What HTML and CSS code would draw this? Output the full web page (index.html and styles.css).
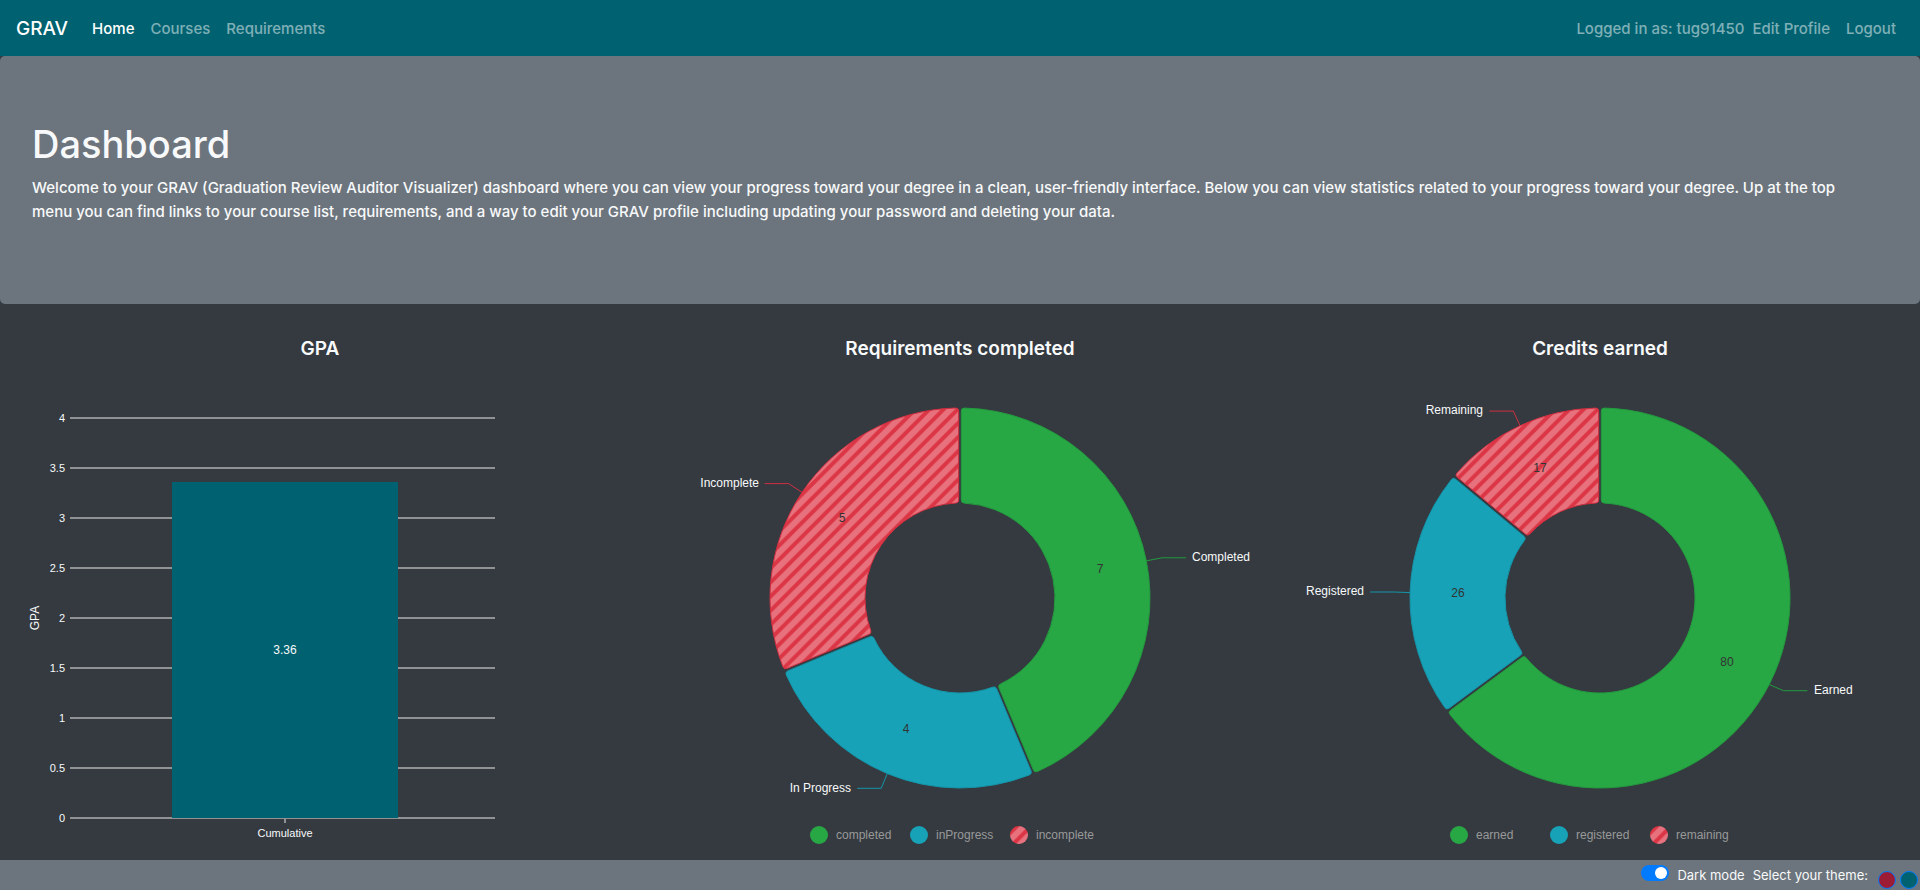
FILE: index.html
```html
<!DOCTYPE html>
<html lang="en">
<head>
<meta charset="utf-8">
<meta name="viewport" content="width=device-width, initial-scale=1">
<title>GRAV</title>
<link rel="stylesheet" href="styles.css">
</head>
<body>
<nav class="navbar">
  <a class="brand" href="#">GRAV</a>
  <a class="nav-link active" href="#">Home</a>
  <a class="nav-link" href="#">Courses</a>
  <a class="nav-link" href="#">Requirements</a>
  <span class="user">Logged in as: tug91450</span>
  <a class="nav-link" href="#">Edit Profile</a>
  <a class="nav-link" href="#">Logout</a>
</nav>

<header class="intro">
  <h1>Dashboard</h1>
  <p>Welcome to your GRAV (Graduation Review Auditor Visualizer) dashboard where you can view your progress toward your degree in a clean, user-friendly interface. Below you can view statistics related to your progress toward your degree. Up at the top menu you can find links to your course list, requirements, and a way to edit your GRAV profile including updating your password and deleting your data.</p>
</header>

<main class="charts">
  <section class="chart">
    <h2>GPA</h2>
    <svg viewBox="0 0 640 500" role="img" aria-label="Cumulative GPA 3.36">
      <path class="grid" d="M70 50H495M70 100H495M70 150H495M70 200H495M70 250H495M70 300H495M70 350H495M70 400H495M70 450H495"/>
      <path class="grid" d="M285 450V455"/>
      <rect class="bar" x="172" y="114" width="226" height="336"/>
      <g class="ticks">
        <text x="65" y="50">4</text>
        <text x="65" y="100">3.5</text>
        <text x="65" y="150">3</text>
        <text x="65" y="200">2.5</text>
        <text x="65" y="250">2</text>
        <text x="65" y="300">1.5</text>
        <text x="65" y="350">1</text>
        <text x="65" y="400">0.5</text>
        <text x="65" y="450">0</text>
      </g>
      <text class="category" x="285" y="465">Cumulative</text>
      <text class="bar-value" x="285" y="282">3.36</text>
      <text class="axis-title" transform="translate(35 250) rotate(-90)">GPA</text>
    </svg>
  </section>

  <section class="chart">
    <h2>Requirements completed</h2>
    <svg viewBox="0 0 640 500" role="img" aria-label="Requirements: 7 completed, 4 in progress, 5 incomplete">
      <defs>
        <pattern id="stripes" width="14.142" height="14.142" patternUnits="userSpaceOnUse">
          <rect width="14.142" height="14.142" fill="#dc3545"/>
          <path d="M-14.142 14.142L14.142 -14.142M-14.142 28.284L28.284 -14.142M0 28.284L28.284 0" stroke="#fff" stroke-opacity=".3" stroke-width="6" stroke-linecap="square"/>
        </pattern>
      </defs>
      <g class="donut" transform="translate(320 230)">
        <path class="slice done" data-value="7"/>
        <path class="slice active" data-value="4"/>
        <path class="slice open" data-value="5"/>
        <path class="link done" d="M186.3 -37.1L202 -40.2H226"/>
        <path class="link active" d="M-72.7 175.5L-78.8 190.3H-102.8"/>
        <path class="link open" d="M-158 -105.6L-171.3 -114.4H-195.3"/>
        <text class="label" x="232" y="-40">Completed</text>
        <text class="label left" x="-109" y="191">In Progress</text>
        <text class="label left" x="-201" y="-114">Incomplete</text>
        <text class="value" x="140" y="-28">7</text>
        <text class="value" x="-54" y="132">4</text>
        <text class="value" x="-118" y="-79">5</text>
      </g>
      <g class="legend">
        <g transform="translate(170 458)"><circle class="done" cx="9" cy="9" r="9"/><text x="26" y="9">completed</text></g>
        <g transform="translate(270 458)"><circle class="active" cx="9" cy="9" r="9"/><text x="26" y="9">inProgress</text></g>
        <g transform="translate(370 458)"><circle class="open" cx="9" cy="9" r="9"/><text x="26" y="9">incomplete</text></g>
      </g>
    </svg>
  </section>

  <section class="chart">
    <h2>Credits earned</h2>
    <svg viewBox="0 0 640 500" role="img" aria-label="Credits: 80 earned, 26 registered, 17 remaining">
      <g class="donut" transform="translate(320 230)">
        <path class="slice done" data-value="80"/>
        <path class="slice active" data-value="26"/>
        <path class="slice open" data-value="17"/>
        <path class="link done" d="M169.2 86.5L183.4 92.7H207.4"/>
        <path class="link active" d="M-189.9 -5.4L-205.9 -6H-229.9"/>
        <path class="link open" d="M-80 -172.4L-86.7 -186.9H-110.7"/>
        <text class="label" x="214" y="93">Earned</text>
        <text class="label left" x="-236" y="-6">Registered</text>
        <text class="label left" x="-117" y="-187">Remaining</text>
        <text class="value" x="127" y="65">80</text>
        <text class="value" x="-142" y="-4">26</text>
        <text class="value" x="-60" y="-129">17</text>
      </g>
      <g class="legend">
        <g transform="translate(170 458)"><circle class="done" cx="9" cy="9" r="9"/><text x="26" y="9">earned</text></g>
        <g transform="translate(270 458)"><circle class="active" cx="9" cy="9" r="9"/><text x="26" y="9">registered</text></g>
        <g transform="translate(370 458)"><circle class="open" cx="9" cy="9" r="9"/><text x="26" y="9">remaining</text></g>
      </g>
    </svg>
  </section>
</main>

<footer class="settings">
  <input class="switch" type="checkbox" role="switch" id="dark" checked>
  <label for="dark">Dark mode</label>
  <span class="theme-label">Select your theme:</span>
  <div class="swatches">
    <button class="swatch cherry" type="button" aria-label="Cherry theme"></button>
    <button class="swatch teal" type="button" aria-label="Teal theme"></button>
  </div>
</footer>
<script src="charts.js"></script>
</body>
</html>
```

FILE: styles.css
```css
* { box-sizing: border-box; }

body {
  margin: 0;
  min-height: 100vh;
  background: #343a40;
  color: #f8f9fa;
  font: 500 15px/24px Inter, "Liberation Sans", sans-serif;
}

.navbar {
  display: flex;
  align-items: center;
  min-height: 56px;
  padding: 9px 16px 7px;
  background: #006270;
}

.navbar a { text-decoration: none; }

.brand {
  margin-right: 16px;
  color: #fff;
  font-size: 19px;
}

.nav-link {
  padding: 8px;
  color: rgba(255, 255, 255, .5);
}

.nav-link.active { color: #fff; }

.user {
  margin-left: auto;
  color: rgba(255, 255, 255, .5);
}

.intro {
  padding: 64px 32px;
  border-radius: 5px;
  background: #6c757d;
}

.intro h1 {
  margin: 0 0 8px;
  font-size: 38px;
  font-weight: 500;
  line-height: 48px;
}

.intro p {
  margin: 0 0 16px;
  padding-right: 24px;
}

.nav-link:last-child { padding-right: 8px; }

.charts {
  display: grid;
  grid-template-columns: repeat(3, 1fr);
  padding-top: 33px;
}

.chart h2 {
  margin: 0 0 7px;
  font-size: 19px;
  font-weight: 600;
  line-height: 24px;
  text-align: center;
}

.chart svg {
  display: block;
  width: 100%;
  overflow: visible;
}

.chart text {
  fill: #f8f9fa;
  font: 12px "Liberation Sans", Arial, sans-serif;
  dominant-baseline: central;
}

.grid { stroke: #919293; stroke-width: 2; }
.bar { fill: #006270; }
.chart .ticks text { font-size: 11px; text-anchor: end; }
.chart .category { font-size: 11px; text-anchor: middle; }
.chart .bar-value, .chart .axis-title { text-anchor: middle; }

.done { fill: #28a745; stroke: #239b3e; }
.active { fill: #17a2b8; stroke: #1595a9; }
.open { fill: url(#stripes); stroke: #cf2f40; }
.chart .link { fill: none; }
.chart .label, .chart .value { dominant-baseline: middle; }
.chart .left { text-anchor: end; }
.chart .value { fill: #333; text-anchor: middle; }
.legend circle { stroke: none; }
.chart .legend text { fill: #999; }

.settings {
  position: fixed;
  right: 0;
  bottom: 0;
  left: 0;
  display: flex;
  justify-content: flex-end;
  height: 30px;
  padding-right: 2px;
  background: #6c757d;
  font-size: 13px;
  font-weight: 400;
  line-height: 31px;
}

.switch {
  width: 28px;
  height: 16px;
  margin: 5px 8px 0 0;
  padding: 2px;
  appearance: none;
  border-radius: 8px;
  background: #007bff;
}

.switch::before {
  display: block;
  width: 12px;
  height: 12px;
  border-radius: 50%;
  background: #fff;
  content: "";
}

.switch:checked::before { margin-left: auto; }

.theme-label { margin-left: 8px; }

.swatches {
  display: flex;
  gap: 4px;
  margin: 11px 0 0 10px;
}

.swatch {
  width: 18px;
  height: 18px;
  padding: 0;
  border: 1px solid #007bff;
  border-radius: 50%;
}

.cherry { background: #9d1c35; }
.teal { background: #006270; }
```

FILE: charts.js
```js
// Donut geometry, in SVG units.
const OUTER = 190;
const INNER = 95;
const CORNER = 3;
const HALF_GAP = 1.3;
const PAD_ANGLE = 0.7 * Math.PI / 180;

function slicePath(start, end) {
  const at = (radius, angle) =>
    `${(radius * Math.sin(angle)).toFixed(2)} ${(-radius * Math.cos(angle)).toFixed(2)}`;
  // Angle taken by a rounded corner, and the point where it leaves the straight edge.
  const corner = (radius) => {
    const turn = Math.asin((HALF_GAP + CORNER) / radius);
    const along = radius * Math.cos(turn);
    return { turn, radius: Math.hypot(along, HALF_GAP), edge: Math.atan2(HALF_GAP, along) };
  };
  const o = corner(OUTER - CORNER);
  const i = corner(INNER + CORNER);
  const large = end - start > Math.PI ? 1 : 0;
  const round = `A${CORNER} ${CORNER} 0 0 1 `;
  return `M${at(o.radius, start + o.edge)}` +
    round + at(OUTER, start + o.turn) +
    `A${OUTER} ${OUTER} 0 ${large} 1 ` + at(OUTER, end - o.turn) +
    round + at(o.radius, end - o.edge) +
    `L${at(i.radius, end - i.edge)}` +
    round + at(INNER, end - i.turn) +
    `A${INNER} ${INNER} 0 ${large} 0 ` + at(INNER, start + i.turn) +
    round + at(i.radius, start + i.edge) + 'Z';
}

document.querySelectorAll('.donut').forEach((donut) => {
  const slices = [...donut.querySelectorAll('.slice')];
  const total = slices.reduce((sum, slice) => sum + Number(slice.dataset.value), 0);
  const scale = (2 * Math.PI - slices.length * PAD_ANGLE) / total;
  let angle = 0;
  slices.forEach((slice) => {
    const end = angle + slice.dataset.value * scale + PAD_ANGLE;
    slice.setAttribute('d', slicePath(angle, end));
    angle = end;
  });
});
```
